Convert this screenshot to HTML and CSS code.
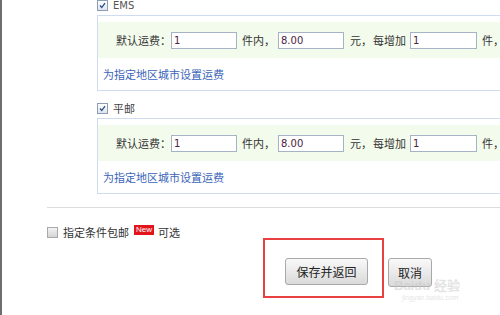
FILE: index.html
```html
<!DOCTYPE html>
<html lang="zh-CN">
<head>
  <meta charset="UTF-8">
  <title>运费模板</title>
  <link rel="stylesheet" href="styles.css">
</head>
<body>
  <div class="page">
    <div class="ships">
      <div class="opt">
        <span class="chk on"><svg viewBox="0 0 11 11"><path d="M2.5 5.5 L4.6 8 L8.6 2.6" /></svg></span>
        <span class="opt-name latin">EMS</span>
      </div>
      <div class="box">
        <div class="fee-row">
          <span class="w55">默认运费：</span>
          <input class="num m5" type="text" value="1">
          <span class="w33 m3">件内，</span>
          <input class="num m6" type="text" value="8.00">
          <span class="w22 m1">元，</span>
          <span class="w33 m4">每增加</span>
          <input class="num wide m5" type="text" value="1">
          <span>件，</span>
        </div>
        <a href="#" class="area-link">为指定地区城市设置运费</a>
      </div>

      <div class="opt">
        <span class="chk on"><svg viewBox="0 0 11 11"><path d="M2.5 5.5 L4.6 8 L8.6 2.6" /></svg></span>
        <span class="opt-name">平邮</span>
      </div>
      <div class="box">
        <div class="fee-row">
          <span class="w55">默认运费：</span>
          <input class="num m5" type="text" value="1">
          <span class="w33 m3">件内，</span>
          <input class="num m6" type="text" value="8.00">
          <span class="w22 m1">元，</span>
          <span class="w33 m4">每增加</span>
          <input class="num wide m5" type="text" value="1">
          <span>件，</span>
        </div>
        <a href="#" class="area-link">为指定地区城市设置运费</a>
      </div>
    </div>

    <div class="divider"></div>

    <div class="free-row">
      <span class="chk off"></span>
      <span class="free-name">指定条件包邮</span>
      <span class="badge">New</span>
      <span>可选</span>
    </div>

    <div class="actions">
      <div class="mark">
        <button class="btn save">保存并返回</button>
      </div>
      <button class="btn cancel">取消</button>
    </div>

    <div class="watermark">
      <div class="wm-big">Bai<b>du</b> 经验</div>
      <div class="wm-small">jingyan.baidu.com</div>
    </div>
  </div>
</body>
</html>
```

FILE: styles.css
```css
body {
  margin: 0;
  background: #fff;
  font-family: "Noto Sans CJK SC", "Liberation Sans", sans-serif;
  font-size: 11px;
  color: #333;
}

.page {
  position: relative;
  height: 315px;
  overflow: hidden;
  border-left: 2px solid #6e6e6e;
}

/* shipping methods */
.ships {
  margin-top: -5px;
  padding-left: 95px;
}

.opt {
  display: flex;
  align-items: center;
  height: 20px;
}

.opt-name {
  margin-left: 5px;
  color: #444;
  font-size: 11px;
}

.latin {
  font-family: "DejaVu Sans", sans-serif;
  font-size: 10px;
  color: #555;
}

.chk {
  display: inline-block;
  box-sizing: border-box;
  width: 11px;
  height: 11px;
  border: 1px solid #8d9db3;
  background: linear-gradient(#ffffff, #dfe4ec);
}

.chk svg {
  display: block;
  width: 9px;
  height: 9px;
}

.chk svg path {
  fill: none;
  stroke: #2c4e86;
  stroke-width: 1.6;
}

.chk.off {
  border-color: #a9a9a9;
  background: linear-gradient(#f3f3f3, #d4d4d4);
}

.box {
  border: 1px solid #cfdcef;
  border-right: none;
  padding-top: 6px;
  margin-bottom: 7px;
  background: #fff;
}

.box:last-child {
  margin-bottom: 0;
}

.fee-row {
  display: flex;
  align-items: center;
  height: 36px;
  padding-left: 18px;
  background: #f3fbec;
  white-space: nowrap;
}

.w55 { width: 55px; }
.w33 { width: 33px; }
.w22 { width: 22px; }
.m1 { margin-right: 1px; }
.m3 { margin-right: 3px; }
.m4 { margin-right: 4px; }
.m5 { margin-right: 5px; }
.m6 { margin-right: 6px; }

.num {
  box-sizing: border-box;
  width: 66px;
  height: 17px;
  padding: 0 2px;
  border: 1px solid #a6b3c6;
  font-family: "DejaVu Sans", sans-serif;
  font-size: 10px;
  color: #4a2340;
  background: #fff;
}

.num.wide {
  width: 67px;
}

.area-link {
  display: block;
  height: 32px;
  line-height: 32px;
  padding-left: 5px;
  color: #3a64b8;
  text-decoration: none;
}

/* free shipping */
.divider {
  height: 0;
  margin: 13px 0 0 45px;
  border-top: 1px solid #dcdcdc;
}

.free-row {
  display: flex;
  align-items: center;
  height: 12px;
  margin-top: 18px;
  padding-left: 45px;
  white-space: nowrap;
}

.free-name {
  margin: 0 5px 0 5px;
}

.badge {
  display: inline-block;
  height: 10px;
  line-height: 10px;
  padding: 0 2px;
  margin: -4px 4px 0 0;
  background: #e4141b;
  color: #fff;
  font-family: "Liberation Sans", sans-serif;
  font-size: 8px;
}

/* buttons */
.actions {
  display: flex;
  align-items: flex-start;
  padding-left: 261px;
}

.mark {
  width: 121px;
  height: 60px;
  box-sizing: border-box;
  border: 2px solid #e8413f;
  padding: 18px 0 0 20px;
}

.btn {
  font-family: "Noto Sans CJK SC", sans-serif;
  font-size: 12px;
  color: #222;
  border: 1px solid #a9a9a9;
  border-radius: 3px;
  background: linear-gradient(#f9f9f9, #dadada);
  padding: 0;
}

.save {
  width: 83px;
  height: 27px;
}

.cancel {
  width: 44px;
  height: 29px;
  margin: 20px 0 0 4px;
}

.watermark {
  position: absolute;
  left: 392px;
  top: 279px;
  color: rgba(200, 200, 200, 0.5);
  pointer-events: none;
}

.wm-big {
  font-family: "Liberation Sans", sans-serif;
  font-size: 13px;
  font-weight: bold;
  line-height: 14px;
}

.wm-small {
  font-family: "Liberation Sans", sans-serif;
  font-size: 7px;
  line-height: 9px;
  margin-left: 8px;
}
```
